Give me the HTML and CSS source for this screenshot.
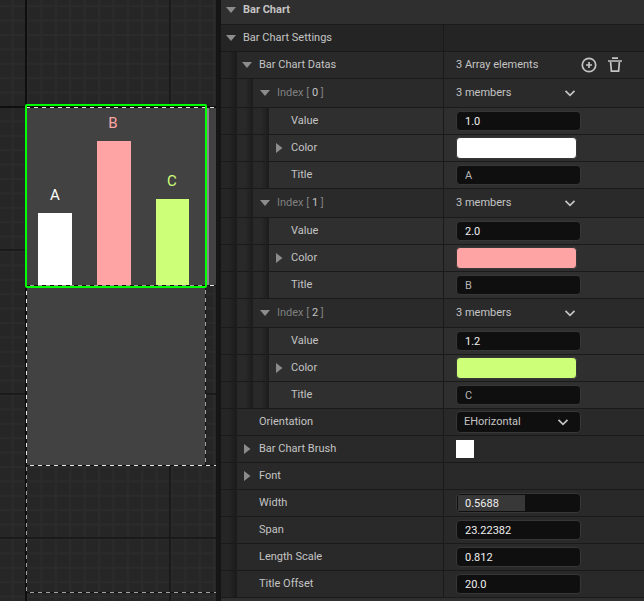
FILE: index.html
```html
<!DOCTYPE html>
<html lang="en">
<head>
<meta charset="utf-8">
<title>Bar Chart</title>
<link rel="stylesheet" href="styles.css">
</head>
<body>
<main class="editor">
  <section class="viewport" aria-label="Designer">
    <svg class="stage" role="img" aria-label="Bar chart preview">
      <defs>
        <pattern id="minor" x="26" y="106" width="14.4" height="14.4" patternUnits="userSpaceOnUse">
          <path d="M0 0H2V14.4H0ZM0 0H14.4V2H0Z" fill="#2b2b2b"/>
        </pattern>
      </defs>
      <rect width="100%" height="100%" fill="#262626"/>
      <rect width="100%" height="100%" fill="url(#minor)"/>
      <path d="M170 0V601M0 250H216M0 394H216M0 538H216" stroke="#1a1a1a" stroke-width="2"/>
      <path d="M26 0V601M0 107H216" stroke="#0e0e0e" stroke-width="2"/>
      <rect x="27" y="107" width="179" height="358" fill="#424242"/>
      <rect x="207" y="108" width="9" height="178" fill="#424242"/>
      <path d="M208 108V286" stroke="#8d858d" stroke-width="2"/>
      <path d="M26 107.5H216M27 285.5H216M27 465.5H216M27 592.5H216M26.5 288V592M205.5 288V465" stroke="#111" fill="none"/>
      <path d="M26 107.5H216" class="dash bright"/>
      <path d="M30 285.5H206" class="dash dim"/>
      <path d="M210 285.5H214" class="dash bright"/>
      <path d="M30 465.5H216M26.5 291V465" class="dash bright"/>
      <path d="M30 592.5H216M26.5 467V592M205.5 290V465" class="dash dim"/>
      <rect x="38" y="213" width="34" height="72" fill="#fff"/>
      <rect x="97" y="141" width="34" height="144" fill="#ffa4a4"/>
      <rect x="156" y="199" width="33" height="86" fill="#ceff78"/>
      <g class="bar-title">
        <text x="55" y="200" fill="#fff">A</text>
        <text x="113" y="128" fill="#ffa4a4">B</text>
        <text x="172" y="186" fill="#ceff78">C</text>
      </g>
      <rect x="26" y="105" width="180" height="182" rx="1" fill="none" stroke="#0f0" stroke-width="2"/>
    </svg>
  </section>

  <section class="details" aria-label="Details">
    <h2 class="category"><button class="toggle"><i class="arrow down"></i>Bar Chart</button></h2>

    <div class="row group">
      <div class="name"><button class="toggle"><i class="arrow down"></i>Bar Chart Settings</button></div>
      <div class="value"></div>
    </div>

    <div class="row">
      <div class="name"><i class="indent"></i><button class="toggle"><i class="arrow down"></i>Bar Chart Datas</button></div>
      <div class="value">
        <span class="summary wide">3 Array elements</span>
        <button class="icon" aria-label="Add element">
          <svg width="16" height="16" viewBox="0 0 16 16"><circle cx="8" cy="8" r="6.7"/><path d="M8 5V11M5 8H11"/></svg>
        </button>
        <button class="icon" aria-label="Remove all elements">
          <svg width="16" height="16" viewBox="0 0 16 16"><path d="M1 4H15M5 1.2H11M3.6 5L4.4 14.2H11.6L12.4 5"/></svg>
        </button>
      </div>
    </div>

    <div class="row item">
      <div class="name"><i class="indent"></i><i class="indent"></i><button class="toggle dimmed"><i class="arrow down"></i><span>Index [ <b>0</b> ]</span></button></div>
      <div class="value"><span class="summary">3 members</span><button class="icon" aria-label="Element 0 options"><svg width="12" height="8" viewBox="0 0 12 8"><path d="M1.5 1.8L6 6.3L10.5 1.8"/></svg></button></div>
    </div>
    <div class="row leaf">
      <div class="name"><i class="indent"></i><i class="indent"></i><i class="indent"></i><label class="plain" for="value0">Value</label></div>
      <div class="value"><input class="field" id="value0" value="1.0"></div>
    </div>
    <div class="row leaf">
      <div class="name"><i class="indent"></i><i class="indent"></i><i class="indent"></i><button class="toggle"><i class="arrow right"></i>Color</button></div>
      <div class="value"><button class="swatch white" aria-label="Color of element 0"></button></div>
    </div>
    <div class="row leaf">
      <div class="name"><i class="indent"></i><i class="indent"></i><i class="indent"></i><label class="plain" for="title0">Title</label></div>
      <div class="value"><input class="field text" id="title0" value="A"></div>
    </div>

    <div class="row item">
      <div class="name"><i class="indent"></i><i class="indent"></i><button class="toggle dimmed"><i class="arrow down"></i><span>Index [ <b>1</b> ]</span></button></div>
      <div class="value"><span class="summary">3 members</span><button class="icon" aria-label="Element 1 options"><svg width="12" height="8" viewBox="0 0 12 8"><path d="M1.5 1.8L6 6.3L10.5 1.8"/></svg></button></div>
    </div>
    <div class="row leaf">
      <div class="name"><i class="indent"></i><i class="indent"></i><i class="indent"></i><label class="plain" for="value1">Value</label></div>
      <div class="value"><input class="field" id="value1" value="2.0"></div>
    </div>
    <div class="row leaf">
      <div class="name"><i class="indent"></i><i class="indent"></i><i class="indent"></i><button class="toggle"><i class="arrow right"></i>Color</button></div>
      <div class="value"><button class="swatch pink" aria-label="Color of element 1"></button></div>
    </div>
    <div class="row leaf">
      <div class="name"><i class="indent"></i><i class="indent"></i><i class="indent"></i><label class="plain" for="title1">Title</label></div>
      <div class="value"><input class="field text" id="title1" value="B"></div>
    </div>

    <div class="row item">
      <div class="name"><i class="indent"></i><i class="indent"></i><button class="toggle dimmed"><i class="arrow down"></i><span>Index [ <b>2</b> ]</span></button></div>
      <div class="value"><span class="summary">3 members</span><button class="icon" aria-label="Element 2 options"><svg width="12" height="8" viewBox="0 0 12 8"><path d="M1.5 1.8L6 6.3L10.5 1.8"/></svg></button></div>
    </div>
    <div class="row leaf">
      <div class="name"><i class="indent"></i><i class="indent"></i><i class="indent"></i><label class="plain" for="value2">Value</label></div>
      <div class="value"><input class="field" id="value2" value="1.2"></div>
    </div>
    <div class="row leaf">
      <div class="name"><i class="indent"></i><i class="indent"></i><i class="indent"></i><button class="toggle"><i class="arrow right"></i>Color</button></div>
      <div class="value"><button class="swatch lime" aria-label="Color of element 2"></button></div>
    </div>
    <div class="row leaf">
      <div class="name"><i class="indent"></i><i class="indent"></i><i class="indent"></i><label class="plain" for="title2">Title</label></div>
      <div class="value"><input class="field text" id="title2" value="C"></div>
    </div>

    <div class="row">
      <div class="name"><i class="indent"></i><label class="plain" for="orientation">Orientation</label></div>
      <div class="value">
        <div class="picker">
          <select id="orientation"><option>EHorizontal</option><option>EVertical</option></select>
          <svg width="12" height="8" viewBox="0 0 12 8"><path d="M1.5 1.8L6 6.3L10.5 1.8"/></svg>
        </div>
      </div>
    </div>
    <div class="row">
      <div class="name"><i class="indent"></i><button class="toggle"><i class="arrow right"></i>Bar Chart Brush</button></div>
      <div class="value"><span class="brush"></span></div>
    </div>
    <div class="row">
      <div class="name"><i class="indent"></i><button class="toggle"><i class="arrow right"></i>Font</button></div>
      <div class="value"></div>
    </div>
    <div class="row">
      <div class="name"><i class="indent"></i><label class="plain" for="width">Width</label></div>
      <div class="value"><input class="field ranged" id="width" value="0.5688"></div>
    </div>
    <div class="row">
      <div class="name"><i class="indent"></i><label class="plain" for="span">Span</label></div>
      <div class="value"><input class="field" id="span" value="23.22382"></div>
    </div>
    <div class="row">
      <div class="name"><i class="indent"></i><label class="plain" for="length">Length Scale</label></div>
      <div class="value"><input class="field" id="length" value="0.812"></div>
    </div>
    <div class="row">
      <div class="name"><i class="indent"></i><label class="plain" for="offset">Title Offset</label></div>
      <div class="value"><input class="field" id="offset" value="20.0"></div>
    </div>
  </section>
</main>
</body>
</html>
```

FILE: styles.css
```css
* { box-sizing: border-box; }

body {
  margin: 0;
  background: #151515;
  color: #c4c4c4;
  font: 11px/16px Roboto, "Liberation Sans", sans-serif;
}

button, input, select {
  margin: 0;
  padding: 0;
  border: 0;
  background: none;
  color: inherit;
  font: inherit;
}

.editor {
  display: grid;
  grid-template-columns: minmax(0, 216fr) minmax(0, 423fr);
  gap: 5px;
  height: 100vh;
  overflow: hidden;
}

.viewport { display: flex; min-height: 0; background: #262626; }
.stage { width: 100%; height: 100%; }
.dash { fill: none; stroke-dasharray: 4 4; }
.bright { stroke: #e4e4e4; }
.dim { stroke: #a0a0a0; }
.bar-title { font-size: 15px; text-anchor: middle; }

.details { background: #2f2f2f; min-height: 0; overflow: hidden; }

.category {
  display: flex;
  height: 25px;
  margin: 0;
  padding-bottom: 4px;
  border-bottom: 1px solid #1a1a1a;
  font-size: 11px;
}

.row {
  display: grid;
  grid-template-columns: minmax(0, 222fr) minmax(0, 201fr);
  height: 27px;
  border-bottom: 1px solid #1a1a1a;
  background: #292929;
}
.group { background: #242424; }
.item { height: 29px; background: #2a2a2a; }
.leaf { background: #2f2f2f; }

.name { display: flex; align-items: center; }
.indent {
  flex: none;
  width: 16px;
  height: 100%;
  background: linear-gradient(90deg, #252525 50%, #1a1a1a);
}
.indent + .indent { background: linear-gradient(90deg, #292929 50%, #1c1c1c); }

.toggle { display: flex; align-items: center; height: 100%; padding-left: 5px; gap: 7px; }
.item .toggle { padding-left: 7px; }
.dimmed { color: #808080; }
.dimmed b { color: #c4c4c4; font-weight: 400; }
.plain { padding-left: 22px; }

.arrow { flex: none; width: 10px; height: 6px; background: #8c8c8c; }
.down { clip-path: polygon(0 0, 100% 0, 50% 100%); }
.right { height: 10px; clip-path: polygon(20% 0, 85% 50%, 20% 100%); }

.value {
  display: flex;
  align-items: center;
  padding-left: 12px;
  border-left: 1px solid #1a1a1a;
}
.summary { width: 108px; }
.wide { width: 125px; }

.icon { display: flex; margin-right: 10px; }
.icon svg, .picker svg { fill: none; stroke: #c4c4c4; stroke-width: 1.7; }

.field {
  width: 125px;
  height: 20px;
  padding: 0 8px;
  border: 1px solid #373737;
  border-radius: 4px;
  background: #0f0f0f;
  color: #f0f0f0;
}
.text { color: #b4b4b4; }
.ranged {
  background: linear-gradient(#383838, #383838) 1px 1px / 67px 16px no-repeat #0f0f0f;
}

.swatch { width: 121px; height: 22px; border: 1px solid #373737; border-radius: 4px; }
.white { background: #fff; }
.pink { background: #ffa4a4; }
.lime { background: #ceff78; }
.brush { width: 18px; height: 18px; background: #fff; }

.picker { display: grid; align-items: center; width: 125px; height: 22px; }
.picker select {
  grid-area: 1 / 1;
  height: 22px;
  padding: 0 7px;
  border: 1px solid #373737;
  border-radius: 4px;
  background: #0f0f0f;
  appearance: none;
}
.picker svg { grid-area: 1 / 1; justify-self: end; margin-right: 12px; pointer-events: none; }
```
